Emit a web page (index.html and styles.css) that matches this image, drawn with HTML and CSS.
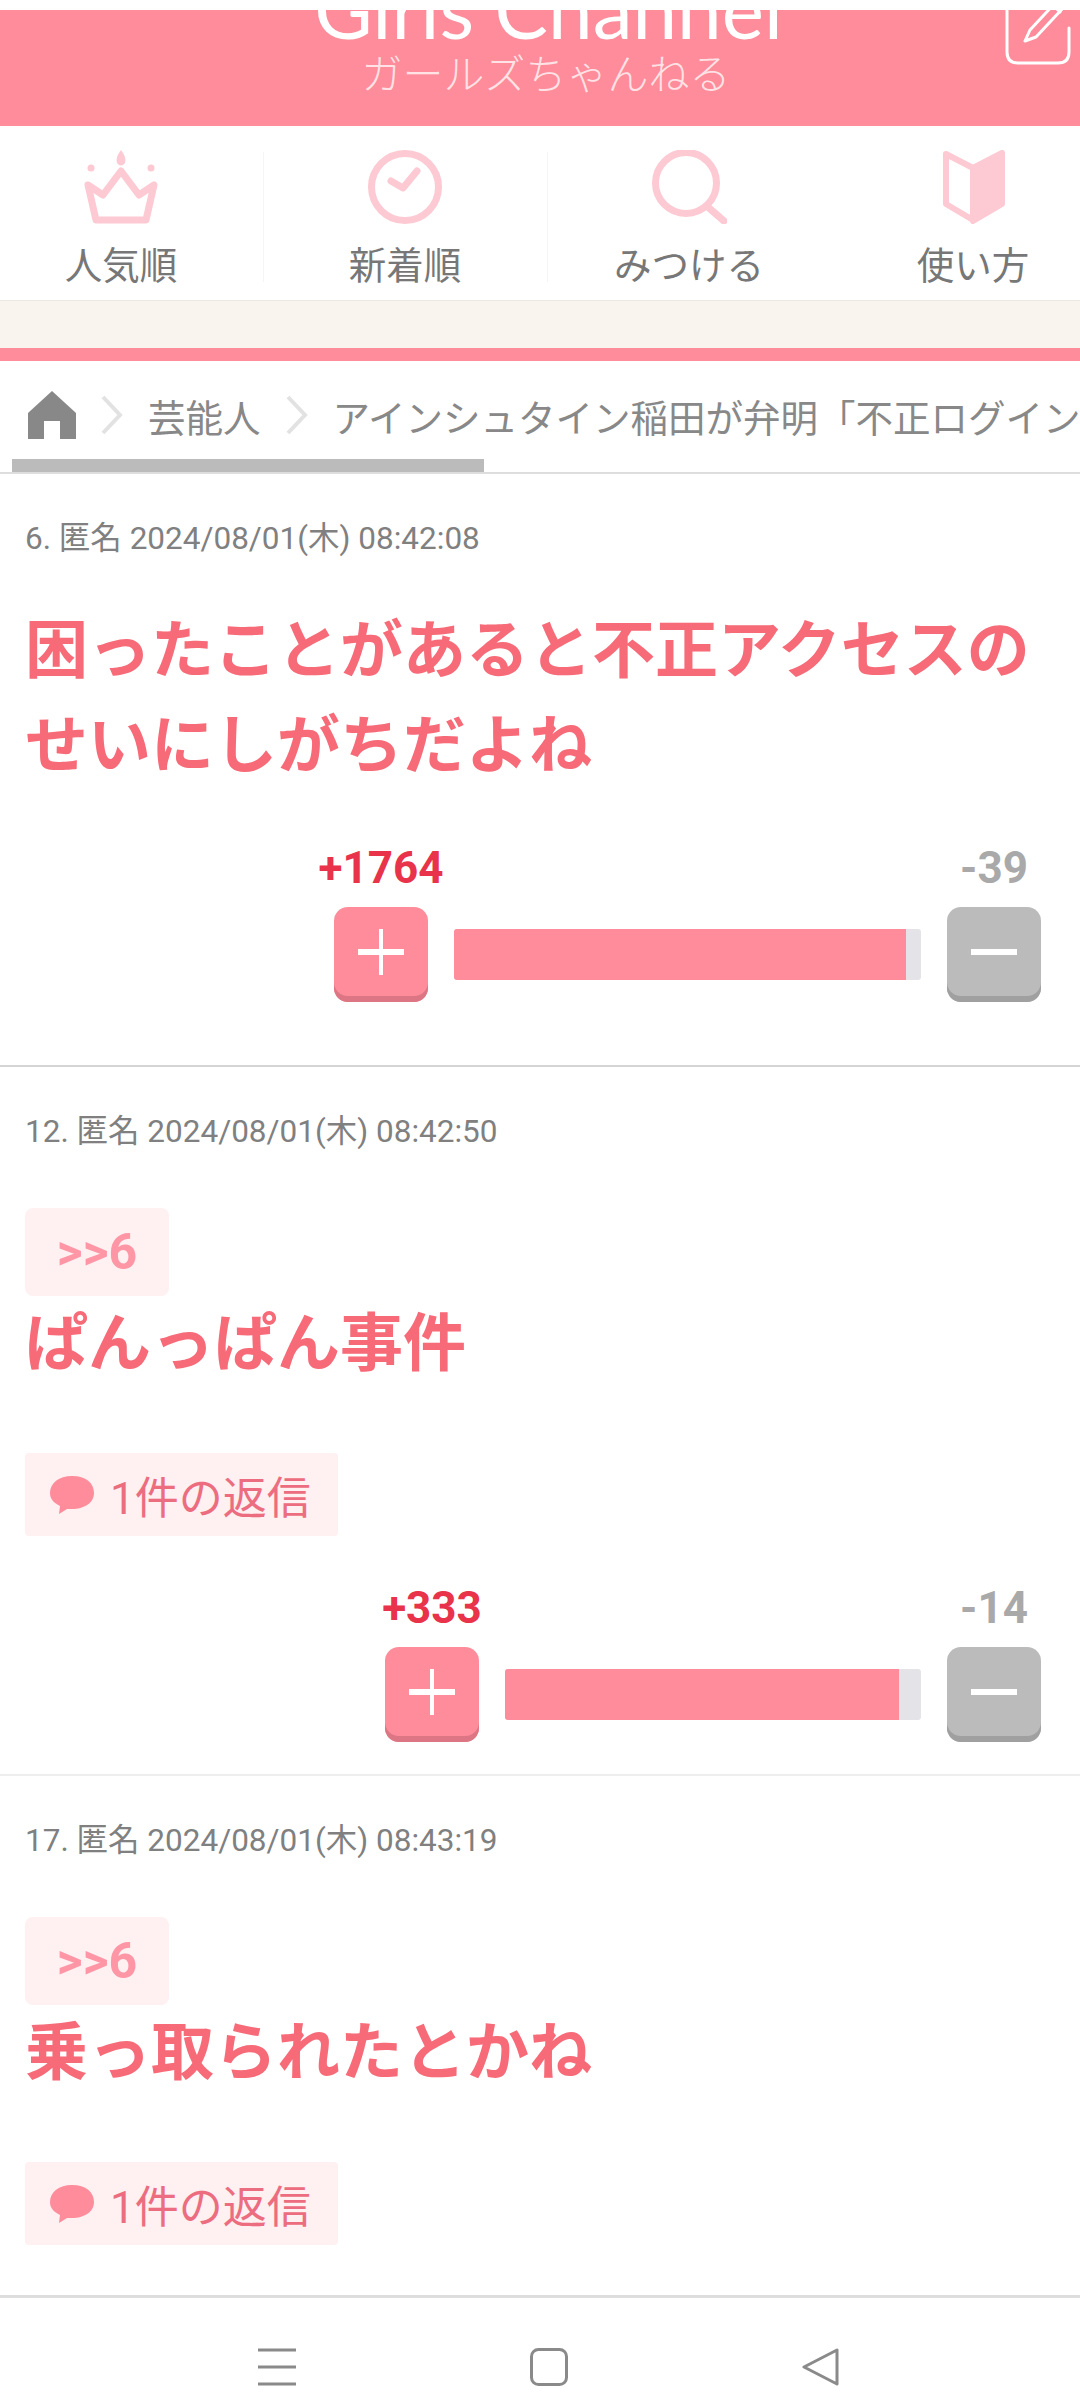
FILE: index.html
```html
<!DOCTYPE html>
<html lang="ja">
<head>
  <meta charset="UTF-8">
  <meta name="viewport" content="width=device-width, initial-scale=1.0">
  <title>ガールズちゃんねる</title>
  <link rel="stylesheet" href="styles.css">
</head>
<body>
  <header class="site-header">
    <div class="logo">Girls Channel</div>
    <div class="logo-sub">ガールズちゃんねる</div>
    <svg class="edit-icon" viewBox="0 0 66 56" fill="none" stroke="#fff" stroke-width="3" stroke-linecap="round" stroke-linejoin="round">
      <path d="M3 0V42Q3 53 14 53H54Q65 53 65 42V18"/>
      <path d="M52 -8L26 20L21 31L32 27L60 -3"/>
      <path d="M48 -6L56 2"/>
    </svg>
  </header>

  <nav class="tabs">
    <a class="tab">
      <svg viewBox="0 0 76 74" fill="none" stroke="#fdc9d2" stroke-width="7" stroke-linejoin="round">
        <path d="M5 35L20 45L38 21L56 45L71 35L63 70H13Z"/>
        <path d="M38 0Q44 8 42 13Q38 18 34 13Q32 8 38 0Z" fill="#fdc9d2" stroke="none"/>
        <circle cx="8" cy="18" r="3.5" fill="#fdc9d2" stroke="none"/>
        <circle cx="68" cy="18" r="3.5" fill="#fdc9d2" stroke="none"/>
      </svg>
      <span>人気順</span>
    </a>
    <a class="tab tab-line">
      <svg viewBox="0 0 76 74" fill="none" stroke="#fdc9d2" stroke-width="7" stroke-linecap="round" stroke-linejoin="round">
        <circle cx="38" cy="37" r="33.5"/>
        <path d="M24 31L36 38L50 21"/>
      </svg>
      <span>新着順</span>
    </a>
    <a class="tab tab-line">
      <svg viewBox="0 0 76 74" fill="none" stroke="#fdc9d2" stroke-width="7" stroke-linecap="round">
        <circle cx="35" cy="33" r="30.5"/>
        <path d="M58 58L73 71"/>
      </svg>
      <span>みつける</span>
    </a>
    <a class="tab">
      <svg viewBox="0 0 76 74" fill="none" stroke="#fdc9d2" stroke-width="6" stroke-linejoin="round">
        <path d="M11 4L38 18V70L11 54Z"/>
        <path d="M38 18L67 3V54L38 71Z" fill="#fdc9d2"/>
      </svg>
      <span>使い方</span>
    </a>
  </nav>

  <div class="ad-band"></div>

  <div class="breadcrumb">
    <svg class="crumb-home" viewBox="0 0 48 48" fill="#888">
      <path d="M24 0L48 22V48H32V30H16V48H0V22Z"/>
    </svg>
    <svg class="crumb-arrow" viewBox="0 0 22 40" fill="none" stroke="#e2e2e2" stroke-width="4"><path d="M2 2L19 20L2 38"/></svg>
    <span>芸能人</span>
    <svg class="crumb-arrow" viewBox="0 0 22 40" fill="none" stroke="#e2e2e2" stroke-width="4"><path d="M2 2L19 20L2 38"/></svg>
    <span>アインシュタイン稲田が弁明「不正ログイン</span>
    <div class="crumb-scroll"></div>
  </div>

  <section class="post post-first">
    <p class="post-meta">6. 匿名 2024/08/01(木) 08:42:08</p>
    <p class="post-body post-body-top">困ったことがあると不正アクセスの<br>せいにしがちだよね</p>
    <div class="vote">
      <div class="vote-col">
        <span class="count-plus">+1764</span>
        <button class="vote-btn btn-plus"><svg viewBox="0 0 46 46"><path d="M23 0V46" stroke="#fff" stroke-width="4" fill="none"/><path d="M0 23H46" stroke="#fff" stroke-width="6" fill="none"/></svg></button>
      </div>
      <div class="vote-bar" style="width: 467px"><div class="vote-fill" style="width: 452px"></div></div>
      <div class="vote-col">
        <span class="count-minus">-39</span>
        <button class="vote-btn btn-minus"><svg viewBox="0 0 46 46"><path d="M0 23H46" stroke="#fff" stroke-width="6" fill="none"/></svg></button>
      </div>
    </div>
  </section>

  <section class="post post-second">
    <p class="post-meta">12. 匿名 2024/08/01(木) 08:42:50</p>
    <a class="anchor">&gt;&gt;6</a>
    <p class="post-body">ぱんっぱん事件</p>
    <a class="reply-link">
      <svg viewBox="0 0 44 38" fill="#ff8c9a"><path d="M22 0C36 0 44 7 44 17C44 27 34 33 22 33C20 33 18 33 17 33L9 38L10 30C4 27 0 23 0 17C0 7 9 0 22 0Z"/></svg>
      <span>1件の返信</span>
    </a>
    <div class="vote">
      <div class="vote-col">
        <span class="count-plus">+333</span>
        <button class="vote-btn btn-plus"><svg viewBox="0 0 46 46"><path d="M23 0V46" stroke="#fff" stroke-width="4" fill="none"/><path d="M0 23H46" stroke="#fff" stroke-width="6" fill="none"/></svg></button>
      </div>
      <div class="vote-bar" style="width: 416px"><div class="vote-fill" style="width: 394px"></div></div>
      <div class="vote-col">
        <span class="count-minus">-14</span>
        <button class="vote-btn btn-minus"><svg viewBox="0 0 46 46"><path d="M0 23H46" stroke="#fff" stroke-width="6" fill="none"/></svg></button>
      </div>
    </div>
  </section>

  <section class="post post-third">
    <p class="post-meta">17. 匿名 2024/08/01(木) 08:43:19</p>
    <a class="anchor">&gt;&gt;6</a>
    <p class="post-body">乗っ取られたとかね</p>
    <a class="reply-link">
      <svg viewBox="0 0 44 38" fill="#ff8c9a"><path d="M22 0C36 0 44 7 44 17C44 27 34 33 22 33C20 33 18 33 17 33L9 38L10 30C4 27 0 23 0 17C0 7 9 0 22 0Z"/></svg>
      <span>1件の返信</span>
    </a>
  </section>

  <footer class="system-nav">
    <svg viewBox="0 0 38 38" stroke="#8a8a8a" stroke-width="3" fill="none"><path d="M0 2H38M0 19H38M0 36H38"/></svg>
    <svg viewBox="0 0 38 38" stroke="#8a8a8a" stroke-width="3" fill="none"><rect x="1.5" y="1.5" width="35" height="35" rx="7"/></svg>
    <svg viewBox="0 0 38 38" stroke="#8a8a8a" stroke-width="3" fill="none" stroke-linejoin="round"><path d="M35 2V36L2 19Z"/></svg>
  </footer>
</body>
</html>
```

FILE: styles.css
```css
/* Page */
html, body {
  margin: 0;
  padding: 0;
}

body {
  width: 1080px;
  height: 2400px;
  overflow: hidden;
  background: #fff;
  padding-top: 10px;
  box-sizing: border-box;
  font-family: Roboto, "Noto Sans CJK JP", sans-serif;
}

/* Header */
.site-header {
  position: relative;
  height: 116px;
  background: #ff8c9a;
  overflow: hidden;
  text-align: center;
  color: #fff;
}

.logo {
  font-family: Lato, sans-serif;
  font-weight: 400;
  font-size: 80px;
  line-height: 86px;
  margin-top: -45px;
  margin-left: 17px;
}

.logo-sub {
  font-family: "Noto Sans CJK JP", sans-serif;
  font-weight: 300;
  font-size: 41px;
  line-height: 44px;
  margin-top: -2px;
  margin-left: 12px;
  color: rgba(255, 255, 255, 0.75);
}

.edit-icon {
  position: absolute;
  left: 1004px;
  top: 0;
  width: 66px;
  height: 56px;
  overflow: visible;
}

/* Tabs */
.tabs {
  display: grid;
  grid-template-columns: repeat(4, 284px);
  margin-left: -21px;
  height: 174px;
  padding-top: 1px;
  box-sizing: border-box;
}

.tab {
  display: flex;
  flex-direction: column;
  align-items: center;
  padding-top: 23px;
  color: #777;
  font-size: 37.5px;
  line-height: 44px;
  position: relative;
}

.tab svg {
  width: 76px;
  height: 74px;
  margin-bottom: 20px;
}

.tab-line::before {
  content: "";
  position: absolute;
  left: 0;
  top: 25px;
  bottom: 18px;
  border-left: 1px solid #f5f5f5;
}

.ad-band {
  height: 47px;
  background: #faf4ee;
  border-top: 1px solid #ebe8e4;
  border-bottom: 13px solid #ff8c9a;
}

/* Breadcrumb */
.breadcrumb {
  position: relative;
  display: flex;
  align-items: center;
  height: 113px;
  padding: 0 0 3px 28px;
  box-sizing: border-box;
  border-bottom: 2px solid #ddd;
  white-space: nowrap;
  overflow: hidden;
  color: #888;
  font-size: 37.5px;
}

.crumb-home {
  width: 48px;
  height: 48px;
  flex: none;
}

.crumb-arrow {
  width: 22px;
  height: 40px;
  flex: none;
  margin: 0 25px;
}

.crumb-scroll {
  position: absolute;
  left: 12px;
  bottom: 0;
  width: 472px;
  height: 13px;
  background: #bbb;
}

/* Posts */
.post {
  padding: 45px 25px 0;
  box-sizing: border-box;
}

.post-first {
  height: 593px;
  border-bottom: 2px solid #d5d5d5;
}

.post-second {
  height: 709px;
  border-bottom: 2px solid #eee;
}

.post-third {
  height: 522px;
  border-bottom: 3px solid #ddd;
}

.post-meta {
  margin: 0;
  color: #808080;
  font-size: 31.5px;
  line-height: 40px;
}

.post-body {
  margin: 0;
  color: #f76a78;
  font-size: 63px;
  font-weight: 700;
  line-height: 95px;
}

.post-body-top {
  margin-top: 44px;
}

.anchor {
  display: flex;
  align-items: center;
  justify-content: center;
  width: 144px;
  height: 88px;
  margin-top: 56px;
  background: #fff0f2;
  border-radius: 8px;
  color: #ff96a5;
  font-size: 50px;
  font-weight: 700;
}

.reply-link {
  display: inline-flex;
  align-items: center;
  gap: 16px;
  height: 83px;
  margin-top: 62px;
  padding: 0 27px 0 25px;
  background: #fff0f2;
  border-radius: 4px;
  color: #ec6d80;
  font-size: 44px;
}

.reply-link svg {
  width: 44px;
  height: 38px;
}

/* Vote */
.vote {
  display: flex;
  justify-content: flex-end;
  align-items: flex-end;
  gap: 26px;
  margin-top: 52px;
  padding-right: 14px;
}

.post-second .vote {
  margin-top: 49px;
}

.vote-col {
  display: flex;
  flex-direction: column;
  align-items: center;
  gap: 16px;
  width: 94px;
}

.count-plus,
.count-minus {
  font-size: 44px;
  line-height: 46px;
  font-weight: 700;
  white-space: nowrap;
}

.count-plus {
  color: #e8334a;
}

.count-minus {
  color: #a9a9a9;
}

.vote-btn {
  display: flex;
  align-items: center;
  justify-content: center;
  width: 94px;
  height: 95px;
  padding: 0 0 6px;
  border: none;
  border-radius: 14px;
  box-sizing: border-box;
}

.vote-btn svg {
  width: 46px;
  height: 46px;
}

.btn-plus {
  background: #ff8c9a;
  box-shadow: inset 0 -6px 0 #dc7685;
}

.btn-minus {
  background: #bbb;
  box-shadow: inset 0 -6px 0 #a0a0a0;
}

.vote-bar {
  height: 51px;
  margin-bottom: 22px;
  background: #e4e4e8;
  border-radius: 3px;
  overflow: hidden;
}

.vote-fill {
  height: 100%;
  background: #ff8c9a;
}

/* System nav */
.system-nav {
  display: grid;
  grid-template-columns: repeat(3, 38px);
  justify-content: space-between;
  width: 582px;
  margin-left: 258px;
  padding-top: 50px;
}

.system-nav svg {
  width: 38px;
  height: 38px;
}
```
